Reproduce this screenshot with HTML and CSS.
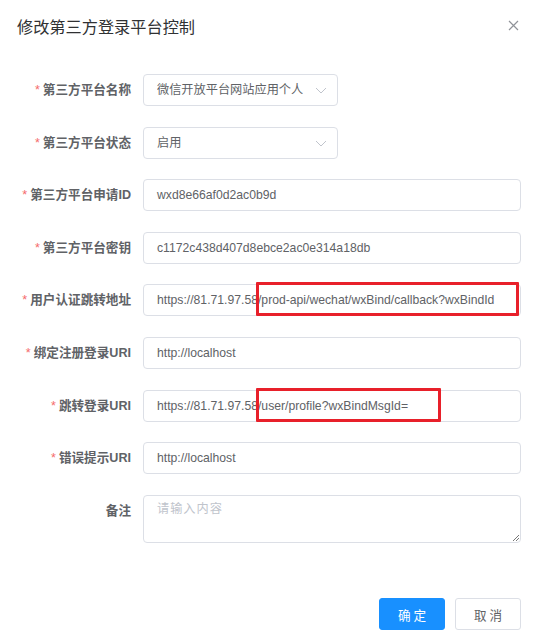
FILE: index.html
```html
<!DOCTYPE html>
<html lang="zh-CN">
<head>
<meta charset="utf-8">
<title>修改第三方登录平台控制</title>
<link rel="stylesheet" href="styles.css">
</head>
<body>
<div class="dialog">
  <div class="header">
    <span class="title">修改第三方登录平台控制</span>
    <svg class="close" width="11" height="11" viewBox="0 0 11 11"><path d="M1 1L10 10M10 1L1 10" stroke="#909399" stroke-width="1.2" fill="none"/></svg>
  </div>
  <div class="body">
    <div class="row">
      <label class="label req">第三方平台名称</label>
      <div class="field select"><span class="val">微信开放平台网站应用个人版</span><svg class="arrow" width="12" height="7" viewBox="0 0 12 7"><path d="M1 1L6 6L11 1" stroke="#c0c4cc" stroke-width="1" fill="none"/></svg></div>
    </div>
    <div class="row">
      <label class="label req">第三方平台状态</label>
      <div class="field select"><span class="val">启用</span><svg class="arrow" width="12" height="7" viewBox="0 0 12 7"><path d="M1 1L6 6L11 1" stroke="#c0c4cc" stroke-width="1" fill="none"/></svg></div>
    </div>
    <div class="row">
      <label class="label req">第三方平台申请ID</label>
      <div class="field input"><span class="val">wxd8e66af0d2ac0b9d</span></div>
    </div>
    <div class="row">
      <label class="label req">第三方平台密钥</label>
      <div class="field input"><span class="val">c1172c438d407d8ebce2ac0e314a18db</span></div>
    </div>
    <div class="row">
      <label class="label req">用户认证跳转地址</label>
      <div class="field input"><span class="val">https://81.71.97.58/prod-api/wechat/wxBind/callback?wxBindId</span><span class="mark mark1"></span></div>
    </div>
    <div class="row">
      <label class="label req">绑定注册登录URI</label>
      <div class="field input"><span class="val">http://localhost</span></div>
    </div>
    <div class="row">
      <label class="label req">跳转登录URI</label>
      <div class="field input"><span class="val">https://81.71.97.58/user/profile?wxBindMsgId=</span><span class="mark mark2"></span></div>
    </div>
    <div class="row">
      <label class="label req">错误提示URI</label>
      <div class="field input"><span class="val">http://localhost</span></div>
    </div>
    <div class="row">
      <label class="label">备注</label>
      <div class="field textarea"><span class="placeholder">请输入内容</span><svg class="grip" width="7" height="7" viewBox="0 0 7 7"><path d="M1 7L7 1M4 7L7 4" stroke="#555" stroke-width="0.8" fill="none"/></svg></div>
    </div>
  </div>
  <div class="footer">
    <button class="btn primary">确 定</button>
    <button class="btn">取 消</button>
  </div>
</div>
</body>
</html>
```

FILE: styles.css
```css
* { box-sizing: border-box; }
html, body { margin: 0; padding: 0; background: #fff; }
body {
  font-family: "Liberation Sans", "Noto Sans CJK SC", sans-serif;
  color: #606266;
  width: 536px;
  height: 638px;
  overflow: hidden;
}
.dialog { width: 536px; }
.header {
  display: flex;
  justify-content: space-between;
  align-items: center;
  padding: 15px 17px 0 17px;
  height: 24px;
  box-sizing: content-box;
}
.title {
  font-size: 16.2px;
  line-height: 24px;
  color: #303133;
}
.close { margin-right: 0; margin-top: -4px; }
.body { padding: 35px 15px 0 0; }
.row {
  display: flex;
  align-items: flex-start;
  margin-bottom: 20.6px;
}
.label {
  width: 143px;
  flex: none;
  padding-right: 12px;
  text-align: right;
  font-size: 12.6px;
  font-weight: bold;
  line-height: 32px;
  color: #606266;
}
.label.req::before {
  content: "*";
  color: #f56c6c;
  margin-right: 3px;
  font-weight: normal;
}
.field {
  position: relative;
  height: 32px;
  border: 1px solid #dcdfe6;
  border-radius: 4px;
  padding: 0 13px;
  font-size: 12.2px;
  line-height: 30px;
  color: #606266;
  white-space: nowrap;
}
.input { width: 378px; }
.select {
  width: 195px;
  padding-right: 34px;
  overflow: hidden;
}
.select .val { display: block; overflow: hidden; }
.arrow { position: absolute; right: 10px; top: 12px; }
.textarea {
  width: 378px;
  height: 48px;
  line-height: 20px;
  padding-top: 3px;
}
.placeholder { color: #c0c4cc; letter-spacing: 1px; }
.grip { position: absolute; right: 1px; bottom: 1px; }
.mark {
  position: absolute;
  border: 3px solid #e8202a;
  border-radius: 1px;
}
.mark1 { left: 112px; top: -3px; width: 263px; height: 34px; }
.mark2 { left: 112px; top: -3px; width: 185px; height: 34px; }
.footer {
  display: flex;
  justify-content: flex-end;
  gap: 10px;
  padding: 35px 15px 0 0;
}
.btn {
  width: 66px;
  height: 32px;
  border: 1px solid #dcdfe6;
  border-radius: 3px;
  background: #fff;
  color: #606266;
  font-family: "Noto Sans CJK SC", sans-serif;
  font-size: 12.6px;
  padding: 0;
}
.btn.primary {
  background: #1890ff;
  border-color: #1890ff;
  color: #fff;
}
```
